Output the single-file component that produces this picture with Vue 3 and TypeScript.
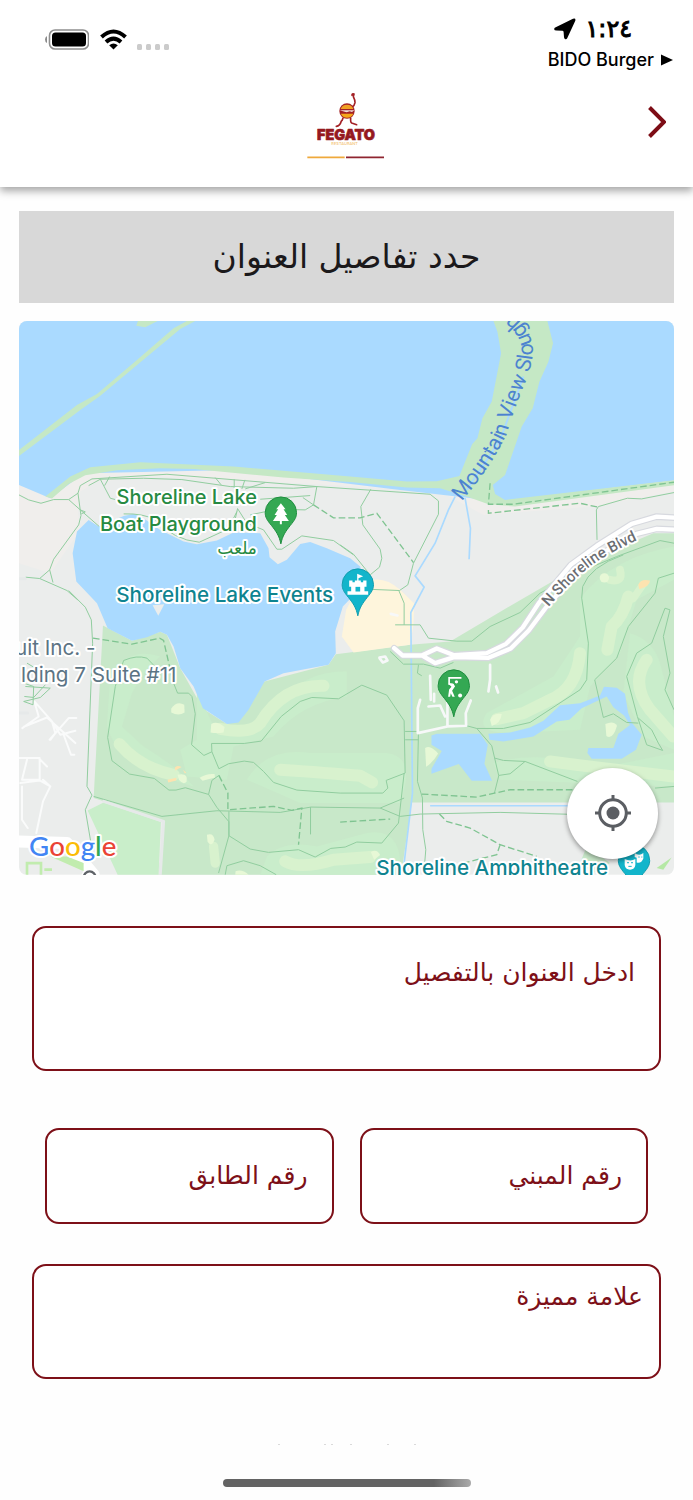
<script setup lang="ts">
import { ref } from 'vue'

const address = ref('')
const building = ref('')
const floor = ref('')
const landmark = ref('')

const googleLetters: { char: string; color: string }[] = [
  { char: 'G', color: '#4285f4' },
  { char: 'o', color: '#ea4335' },
  { char: 'o', color: '#fbbc05' },
  { char: 'g', color: '#4285f4' },
  { char: 'l', color: '#34a853' },
  { char: 'e', color: '#ea4335' },
]
</script>

<template>
  <div class="screen" dir="rtl" lang="ar">
    <header class="header">
      <div class="status" dir="ltr">
        <div class="indicators">
          <svg class="battery" viewBox="0 0 44 21" aria-hidden="true">
            <path d="M2 7Q0 8 0 10.500Q0 13 2 14Z" fill="#8b8b8b" />
            <rect x="4.500" y="1" width="39" height="19" rx="5.500" fill="none" stroke="#8f8f8f" stroke-width="1.600" />
            <rect x="7" y="3.500" width="34" height="14" rx="3.500" fill="#000" />
          </svg>
          <svg class="wifi" viewBox="0 0 27 21" aria-hidden="true">
            <g fill="none" stroke="#000" stroke-width="4">
              <path d="M1.500 8Q13.500 -3 25.500 8" />
              <path d="M6 13Q13.500 6.300 21 13" />
            </g>
            <path d="M9.200 16.300Q13.500 12.800 17.800 16.300L13.500 20.500Z" fill="#000" />
          </svg>
          <svg class="signal" viewBox="0 0 32 6" aria-hidden="true">
            <g fill="#cbcbcb">
              <rect width="5" height="6" rx="1.500" />
              <rect x="9" width="5" height="6" rx="1.500" />
              <rect x="18" width="5" height="6" rx="1.500" />
              <rect x="27" width="5" height="6" rx="1.500" />
            </g>
          </svg>
        </div>
        <div class="clock">
          <div class="time">
            <svg class="arrow" viewBox="0 0 22 22" aria-hidden="true">
              <path d="M1.200 9.600L19 .800Q22 -.200 21.300 2.800L13.200 20.200Q12.400 21.800 11 21Q10 20.500 10 19L9.600 14Q9.500 12.800 8.300 12.700L2.500 12.500Q0 12.500 .2 11Q.3 10 1.200 9.600Z" />
            </svg>
            <span class="digits">١:٢٤</span>
          </div>
          <a class="back-app" href="#">
            BIDO Burger
            <svg class="play" viewBox="0 0 12 12" aria-hidden="true"><path d="M0 .5L12 6L0 11.500Z" /></svg>
          </a>
        </div>
      </div>

      <nav class="nav" dir="ltr">
        <svg class="logo" viewBox="49 36 240 201" role="img" aria-label="Fegato">
          <g fill="none" stroke="#a32025" stroke-width="5" stroke-linecap="round" stroke-linejoin="round">
            <path d="M184 46Q184 40 190 42L188 50Q194 62 193 68Q191 78 185 81" />
            <path d="M157 114Q155 122 152 123Q148 138 137 139" />
            <path d="M180 114Q179 127 183 129L198 134" />
          </g>
          <circle cx="169" cy="93" r="23" fill="#a32025" />
          <path d="M150 87Q154 74 169 74Q184 74 188 87Z" fill="#f0a023" />
          <path d="M147 91H191L184 96L177 94L168 97L157 94Z" fill="#f4dfdc" />
          <path d="M150 101H188Q183 113 169 113Q156 113 150 101Z" fill="#f5a81b" />
          <text x="166" y="179" class="brand">FEGATO</text>
          <text x="162" y="194" class="brand-sub">RESTAURANT</text>
          <path d="M50 232H162" stroke="#efa93c" stroke-width="5" />
          <path d="M166 232H280" stroke="#8f2530" stroke-width="5" />
        </svg>
        <button class="chevron" type="button" aria-label="رجوع">
          <svg viewBox="0 0 18 32" aria-hidden="true"><path d="M1.500 1.500L16 16L1.500 30.500" /></svg>
        </button>
      </nav>
    </header>

    <main class="content">
      <h1 class="title">حدد تفاصيل العنوان</h1>

      <section class="map" aria-label="الخريطة">
        <svg class="map-canvas" viewBox="56 33 1966 1662" direction="ltr">
          <defs>
            <path id="slough-line" d="M1385 575Q1480 460 1520 372Q1535 320 1568 235Q1600 165 1598 115Q1594 60 1535 10" />
            <path id="blvd-line" d="M1645 892Q1730 795 1795 752Q1850 718 1960 668" />
            <path id="pin" d="M0 0C-5-25-14-37-28-55C-42-72-47-80-47-94A47 47 0 0 1 47-94C47-80 42-72 28-55C14-37 5-25 0 0Z" />
            <path id="boulevard" d="M1182 1015L1207 1037H1265L1310 1016L1362 1036L1460 1030L1518 1002L1568 953L1616 880L1712 765L1790 708L1895 642L1970 620L2040 624M1265 1037L1305 1060L1362 1042L1465 1044L1532 1016L1586 962L1640 890L1730 790L1820 722L1910 672L1970 657L2040 660" />
          </defs>

          <rect x="56" y="33" width="1966" height="1662" fill="#ebedec" />
          <path d="M56 520L135 560L250 490L500 470L1050 510L1400 550L2022 505V545L1780 590L1450 615L1320 545L900 520L480 500L290 515L240 545L233 610L240 660L150 790L56 760Z" fill="#f0eeec" />

          <!-- bay -->
          <path d="M56 33H2022V512L1500 575L1200 540L700 480L250 490L150 565L56 525Z" fill="#aadaff" />
          <path d="M56 420L230 285L290 252L410 150L520 55L560 33H585L540 57L440 140L300 257L240 300L56 438ZM413 33H472L435 52L408 47Z" fill="#c5e8c5" />
          <path d="M135 560L210 500L270 472L420 457L700 470L1050 500L1220 515L1310 514L1378 498L1416 403L1432 385L1447 325L1475 275L1503 130L1492 65L1480 33H1642L1659 100L1645 155L1618 215L1598 295L1565 350L1515 495L1478 525L1485 552L1515 570L2022 511V526L1545 590L1465 583L1400 560L1320 535L1220 533L1050 516L850 503L580 477L480 475L350 481L255 496L205 522L155 566Z" fill="#c5e8c5" />
          <path d="M1400 540L1500 390L1570 200" fill="none" stroke="#aadaff" stroke-width="6" />

          <!-- park -->
          <path d="M308 947L395 993L480 966L500 975L540 1075L608 1197L680 1243L793 1115L985 1065L1007 1033L1230 1005L1350 995L1565 868L1640 825L1760 755L1960 670H2022V1478H1235L1203 1695H475L492 1533L280 1465Z" fill="#c8e8c9" />
          <path d="M262 1502L310 1478L482 1537L475 1695H352Z" fill="#c9eeca" />
          <g fill="#c9edcb">
            <path d="M330 1090Q390 1010 480 1040Q430 1080 395 1150L365 1250L430 1310Q530 1370 580 1430L480 1400Q350 1350 320 1250Z" />
            <path d="M590 1140L640 1250Q770 1290 830 1180Q920 1080 1040 1085V1160Q900 1180 820 1280L700 1310L680 1410L560 1400L540 1320L590 1290Z" />
            <path d="M740 1410Q800 1310 930 1330H1160Q1250 1340 1200 1480H900Z" />
            <path d="M800 1640Q850 1590 950 1610L1100 1570Q1210 1550 1200 1695H780Z" />
            <path d="M1740 865Q1840 740 2022 710V810L1910 870L1860 1030L1770 1130L1740 1260L1530 1270Q1420 1270 1460 1210L1660 1100L1740 980Z" />
            <path d="M1480 1360Q1600 1320 1820 1370L2022 1330V1430L1750 1420L1500 1410Z" />
            <path d="M1890 970Q1960 990 1980 1060L2022 1220V1320L1930 1280L1870 1150Z" />
          </g>
          <g fill="none" stroke="#d8f2ce" stroke-width="36" stroke-linecap="round" stroke-linejoin="round">
            <path d="M358 1303Q420 1375 520 1395" />
            <path d="M660 1257Q750 1275 780 1240Q850 1125 970 1128" />
            <path d="M840 1380Q920 1385 1080 1398L1116 1418" />
            <path d="M855 1655Q900 1680 1000 1650L1110 1642" />
            <path d="M1490 1228L1570 1210L1650 1170Q1730 1140 1740 1030" />
            <path d="M1822 1020L1835 950Q1870 920 1885 860" />
            <path d="M1940 1050Q1890 1120 1950 1200L2020 1280" />
            <path d="M1650 1355Q1800 1375 2020 1400" />
            <path d="M640 1610L645 1660" stroke-width="28" />
            <path d="M1830 810Q1870 820 1860 780" stroke-width="24" />
            <path d="M1928 825L1900 866" stroke-width="22" />
          </g>
          <g fill="#e7f8d6">
            <path d="M513 1196Q530 1172 552 1185L553 1208Q535 1220 513 1208Z" />
            <path d="M633 1243Q650 1232 673 1252L670 1268Q648 1272 631 1268Z" />
            <path d="M598 1404Q620 1390 643 1393L644 1403L607 1413Z" />
            <path d="M532 1395Q565 1388 559 1416Q549 1427 536 1410Z" />
            <path d="M620 1575Q640 1568 643 1590Q634 1614 622 1596Z" />
            <path d="M1470 1230Q1480 1207 1505 1213Q1502 1241 1475 1249Z" />
            <path d="M1275 1315Q1290 1303 1314 1331Q1300 1357 1278 1371Z" />
            <path d="M1816 1243Q1840 1231 1851 1248Q1838 1292 1819 1279Z" />
            <circle cx="1813" cy="804" r="14" />
            <path d="M706 1685Q725 1677 745 1695H705Z" />
            <path d="M1112 1627Q1130 1616 1140 1636L1122 1650Z" />
          </g>
          <g fill="#fde3b0">
            <path d="M523 1374Q530 1364 544 1372L525 1382ZM502 1410L528 1404L528 1412L504 1418ZM548 1380L558 1388L554 1391Z" />
            <path d="M1915 825Q1922 805 1950 812Q1950 830 1918 838Z" />
          </g>

          <!-- lakes and streams -->
          <path d="M265 630L230 665L217 730L228 815L290 880L322 955L395 993L440 982L480 966L500 975L520 1010L540 1075L580 1130L608 1195L680 1243L715 1238L745 1200L793 1115L850 1090L985 1065L1007 1030L1005 965L1028 890L1095 820L1080 770L1050 745L980 715L930 696L900 702L860 750L833 763L808 742L805 715L780 670L700 668L650 692L590 703L550 695L480 660L430 625L400 612L370 618L295 650Z" fill="#aadaff" />
          <path d="M457 886L492 883L474 918Z" fill="#ebedec" />
          <path d="M1294 1277L1310 1272H1440L1463 1305L1453 1362L1476 1413H1415L1376 1363L1294 1392V1377L1325 1324L1294 1305Z" fill="#aadaff" />
          <path d="M1465 1272L1530 1268L1590 1253L1630 1233L1680 1186L1740 1180L1800 1157L1812 1131L1850 1134L1875 1152L1884 1208L1896 1240L1925 1275L1908 1320L1865 1347H1775L1762 1330L1765 1315H1840L1855 1272L1890 1246L1872 1217L1840 1192L1820 1160L1745 1195L1708 1230L1670 1235L1600 1280L1510 1295L1468 1290Z" fill="#aadaff" />
          <path d="M1100 815Q1150 795 1200 840L1242 880L1240 945L1230 1005L1060 1028L1025 980L1038 900L1065 850Z" fill="#fef5dc" />
          <g fill="none" stroke="#aadaff" stroke-width="5">
            <path d="M1365 560L1345 600L1305 700L1245 798L1272 832L1232 908L1237 1450L1212 1660" />
            <path d="M1395 565L1411 655L1407 748" />
            <path d="M1290 1488H1760" />
          </g>

          <!-- paths -->
          <g fill="none" stroke="#91cd9f" stroke-width="3" stroke-linejoin="round">
            <path d="M56 555L85 570L122 580L160 569L205 569L233 550L240 527L275 507L500 493L950 530L1290 553L1315 573V613L1240 760L1223 825L1198 842L1100 838" />
            <path d="M265 527L300 508L430 505L545 509L690 530L880 535L950 530L940 585L908 563M300 508L330 565L345 569M328 500L313 527M645 503L663 525M702 508V534M734 510L725 537M780 568L930 557M795 518L735 537" />
            <path d="M205 569L240 600L297 650M233 550L242 617L235 645L160 748L148 780L118 806L76 802M240 600L255 606L243 612M148 780L158 818M118 806L200 842L232 870M205 842L255 892L273 930L277 1000L260 1430L275 1456L255 1500L272 1600" />
            <path d="M370 612Q430 610 465 630Q520 690 597 697L700 650L712 596L740 640L790 660L830 718H845L905 678L1000 692L1060 735M710 605L700 625M750 615L830 598L915 600L940 585" />
            <path d="M1112 538L1082 590L1088 645L1140 718L1145 745L1138 772L1110 795M1020 705L1060 733L1110 795" />
            <path d="M2022 548L1925 567L1882 565L1795 590L1789 600L1791 690" />
            <path d="M345 1130L370 1052Q410 1035 440 1045L462 1068M345 1130L322 1283L335 1353L388 1393L462 1406L506 1441H527L555 1434L625 1454L650 1493L686 1536V1578M520 1120L532 1150H565L575 1160L585 1212L574 1305L611 1337L635 1326L634 1301H732L783 1294L843 1220L900 1175L935 1163L1015 1167L1085 1126L1160 1156L1212 1233L1215 1390L1158 1412L1163 1435L1148 1450H1020L890 1441L820 1418L790 1385L760 1358L732 1354L685 1362L656 1377L635 1326M656 1397L635 1412L625 1454" />
            <path d="M280 1460L485 1520L650 1503L840 1508L932 1492L1140 1495L1212 1465M686 1505V1578L655 1690M686 1578L750 1618L805 1628L895 1620L945 1642L992 1616L1035 1612L1070 1597L1145 1600L1195 1540L1212 1390M675 1695L680 1668L730 1653L780 1668L828 1695M931 1492V1574M1140 1495L1200 1520L1260 1513L1500 1508L1720 1514" />
            <path d="M1185 945H1260L1285 985L1370 994H1415L1470 950L1560 908L1620 850L1730 790L1850 740L1980 692L2022 700M1196 842L1212 880V945M1170 1025L1210 1063H1270L1320 1075L1360 1058M1255 1065L1252 1090L1265 1098" />
            <path d="M1745 865L1748 830Q1770 770 1870 735M1745 865L1765 1000L1760 1110L1740 1140L1590 1238L1510 1256H1430L1400 1248M1430 1256L1475 1308L1496 1398L1483 1450M1484 1345L1510 1352L1575 1355L1732 1415M1496 1397L1530 1392L1575 1355M1784 1110L1850 1045L1885 950L1965 850L1975 805L2022 790M1784 1110L1810 1223L1840 1212L1880 1238L1915 1240M1995 895L2010 900L1990 980L2010 1090L1995 1140L2022 1200M1995 895L1955 1000L1910 1030L1880 1100L1912 1220L1940 1305L1988 1322L1975 1300L1955 1260L1915 1225" />
            <path d="M1215 1265H1255L1252 1415L1267 1465L1268 1560L1277 1620L1272 1680M1215 1290H1255M1965 1435L2022 1430" />
          </g>
          <g fill="none" stroke="#7fc491" stroke-width="4" stroke-dasharray="20 9">
            <path d="M278 985L395 1003L478 985L490 992L518 1115M656 1397L683 1450V1500L820 1490L875 1502L905 1495L895 1605M940 585L1000 624H1080L1130 610L1240 758M1470 520L1465 583L1540 583L2022 517M1465 600V610L1740 580L1795 592M1265 1453L1430 1462L1530 1440H1720M1020 1537L1170 1528M1318 1513L1340 1535L1410 1555L1500 1605L1610 1640M1500 1605L1490 1635L1390 1660" />
          </g>

          <!-- roads -->
          <g fill="none" stroke-linejoin="round" stroke-linecap="round">
            <use href="#boulevard" stroke="#d7d9df" stroke-width="20" />
            <use href="#boulevard" stroke="#fff" stroke-width="13" />
            <path d="M1138 1045L1148 1058L1162 1052L1155 1040L1138 1043M1290 1098L1292 1170M1302 1152V1175M1285 1190L1320 1187L1335 1220M1260 1170L1253 1195V1270L1342 1250L1398 1248L1397 1210L1412 1172M1342 1250V1180M1470 1065V1110L1465 1145M1488 1130L1494 1148M1172 912L1192 917" stroke="#f7f8f9" stroke-width="8" />
            <path d="M50 1595L200 1600L280 1695" stroke="#fff" stroke-width="36" />
            <path d="M310 1475L490 1535L480 1695M56 1210H82M56 807H75" stroke="#e6e9e9" stroke-width="9" />
            <path d="M66 1255L115 1220L102 1175L155 1235L180 1275L225 1263M72 1250L140 1223L225 1300M148 1290L205 1225H228M155 1235L165 1270L150 1290M190 1275L212 1335H222M56 1345H118V1410H65L80 1350M115 1345L140 1370M60 1420L118 1412L150 1430L128 1475L108 1570M65 1430V1530L82 1555M150 1430L128 1410" stroke="#fafbfb" stroke-width="6" />
          </g>
          <path d="M72 1160L100 1163L135 1125M75 1130L150 1135L120 1163L70 1175M70 1120L100 1130L98 1185L70 1175M80 1060L105 1075" fill="none" stroke="#91cd9f" stroke-width="3" />
          <path d="M150 1640L250 1685V1660L200 1640ZM56 1612H100" fill="#c1ecae" />
          <path d="M80 1695V1660H122V1695M132 1680H155" fill="none" stroke="#c1ecae" stroke-width="8" />
          <path d="M1740 1660L1760 1610L1830 1660L1780 1690Z" fill="#c8e8c9" />
          <path d="M1970 1675L2015 1643L1990 1680Z" fill="#b5e8a5" />

          <!-- pins -->
          <g transform="translate(842 702)">
            <use href="#pin" fill="#34a853" stroke="#1e8e3e" stroke-width="3" />
            <path d="M0-122L-14-104H-8L-19-87H-12L-24-69H-3V-59H3V-69H24L12-87H19L8-104H14Z" fill="#fff" />
          </g>
          <g transform="translate(1073 918)">
            <use href="#pin" fill="#12b5cb" stroke="#129eaf" stroke-width="3" />
            <path d="M-2-126L16-119L2-113V-106H9V-101H16V-106H26V-87H20V-74H31V-63H-31V-74H-20V-87H-26V-106H-16V-101H-9V-106H-2Z" fill="#fff" />
            <rect x="-7" y="-87" width="14" height="14" fill="#12b5cb" />
          </g>
          <g transform="translate(1361 1221)">
            <use href="#pin" fill="#34a853" stroke="#1e8e3e" stroke-width="3" />
            <path d="M23-117H-14L-14-98L0-95" fill="none" stroke="#fff" stroke-width="5" />
            <path d="M-16-101L-2-100L4-92L-5-78L3-60H-4L-9-71L-11-60H-17L-14-82L-7-90Z" fill="#fff" />
            <circle cx="8" cy="-105" r="5" fill="#fff" />
            <circle cx="19" cy="-64" r="6" fill="#fff" />
          </g>
          <g transform="translate(1902 1746)">
            <use href="#pin" fill="#12b5cb" stroke="#129eaf" stroke-width="3" />
            <path d="M-28-98Q-10-90 4-98V-80Q2-66-12-66Q-26-66-28-80ZM2-116Q16-106 28-116V-100Q22-84 8-88V-102L2-104Z" fill="#fff" />
            <path d="M-21-87H-15M-9-87H-3M-17-76H-7M13-104H17M22-104H25" stroke="#12b5cb" stroke-width="3" />
          </g>

          <!-- labels -->
          <g class="label green" text-anchor="end">
            <text x="770" y="583">Shoreline Lake</text>
            <text x="770" y="664">Boat Playground</text>
            <text x="770" y="732" class="label-ar">ملعب</text>
          </g>
          <g class="label teal">
            <text x="348" y="875">Shoreline Lake Events</text>
            <text x="1128" y="1696">Shoreline Amphitheatre</text>
          </g>
          <g class="label slate">
            <text x="44" y="1037">uit Inc. -</text>
            <text x="62" y="1118">lding 7 Suite #11</text>
          </g>
          <text class="slough"><textPath href="#slough-line">Mountain View Slough</textPath></text>
          <text class="blvd"><textPath href="#blvd-line">N Shoreline Blvd</textPath></text>
          <path d="M250 1705A18 20 0 0 1 286 1705" fill="none" stroke="#fff" stroke-width="16" />
          <path d="M250 1705A18 20 0 0 1 286 1705" fill="none" stroke="#5f6368" stroke-width="7" />
          <text class="google" x="86" y="1639"><tspan v-for="(letter, i) in googleLetters" :key="i" :fill="letter.color">{{ letter.char }}</tspan></text>
        </svg>
        <button class="locate" type="button" aria-label="موقعي الحالي">
          <svg viewBox="0 0 36 36" aria-hidden="true">
            <circle cx="18" cy="18" r="13.300" fill="none" stroke="#5b5e63" stroke-width="3" />
            <circle cx="18" cy="18" r="6.500" fill="#5b5e63" />
            <path d="M18 0V5M18 31V36M0 18H5M31 18H36" stroke="#5b5e63" stroke-width="3" />
          </svg>
        </button>
      </section>

      <form class="form" @submit.prevent>
        <textarea v-model="address" class="field address" aria-label="ادخل العنوان بالتفصيل" placeholder="ادخل العنوان بالتفصيل"></textarea>
        <div class="pair">
          <input v-model="building" class="field" type="text" aria-label="رقم المبني" placeholder="رقم المبني">
          <input v-model="floor" class="field" type="text" aria-label="رقم الطابق" placeholder="رقم الطابق">
        </div>
        <textarea v-model="landmark" class="field landmark" aria-label="علامة مميزة" placeholder="علامة مميزة"></textarea>
      </form>
    </main>

    <footer class="bottom">
      <svg class="peek" viewBox="0 0 138 1" aria-hidden="true">
        <path d="M0 .5H2M46 .5H48M53 .5H55M72 .5H74M109 .5H111M136 .5H138" stroke="#dadada" />
      </svg>
      <div class="home"></div>
    </footer>
  </div>
</template>

<style>
body {
  margin: 0;
  background: #fefefe;
}
</style>

<style scoped>
.screen {
  display: flex;
  flex-direction: column;
  box-sizing: border-box;
  min-height: 100vh;
  font-family: "DejaVu Sans", sans-serif;
  color: #1b191b;
}
.header {
  background: #fff;
  box-shadow: 0 4px 8px rgba(0, 0, 0, 0.35);
}
.status {
  display: flex;
  justify-content: space-between;
  height: 75px;
  padding: 0 20px 0 45px;
  box-sizing: border-box;
  color: #000;
}
.indicators {
  display: flex;
  align-items: flex-end;
  height: 50px;
}
.battery {
  width: 44px;
  height: 21px;
}
.wifi {
  width: 27px;
  height: 21px;
  margin-left: 11px;
}
.signal {
  width: 32px;
  height: 6px;
  margin-left: 10px;
}
.clock {
  display: flex;
  flex-direction: column;
  align-items: center;
  padding-top: 12px;
}
.time {
  display: flex;
  align-items: center;
  gap: 9px;
  height: 34px;
  padding-right: 34px;
  font-size: 24px;
}
.digits {
  -webkit-text-stroke: 1px #000;
}
.arrow {
  width: 22px;
  height: 22px;
}
.back-app {
  display: flex;
  align-items: center;
  gap: 7px;
  font: 500 18px/30px Inter, sans-serif;
  color: #000;
  text-decoration: none;
}
.play {
  width: 12px;
  height: 12px;
}
.nav {
  display: grid;
  grid-template-columns: 1fr auto 1fr;
  align-items: start;
  padding: 17px 14px 28px;
}
.logo {
  grid-column: 2;
  width: 80px;
  height: 67px;
}
.brand {
  font: 900 43px Inter, sans-serif;
  fill: #95191e;
  stroke: #95191e;
  stroke-width: 2px;
  stroke-linejoin: round;
  text-anchor: middle;
}
.brand-sub {
  font: 500 12px Inter, sans-serif;
  fill: #f3c577;
  text-anchor: middle;
}
.chevron {
  display: flex;
  justify-content: center;
  align-items: center;
  justify-self: end;
  width: 44px;
  height: 60px;
  padding: 0;
  border: 0;
  background: none;
}
.chevron svg {
  width: 18px;
  height: 32px;
  fill: none;
  stroke: #7d0d16;
  stroke-width: 4;
}
.content {
  padding: 24px 19px 0;
}
.title {
  margin: 0 0 18px;
  padding: 18px 0;
  background: #d8d8d8;
  font-size: 33px;
  font-weight: 400;
  line-height: 56px;
  text-align: center;
}
.map {
  position: relative;
  overflow: hidden;
  border-radius: 8px;
}
.map-canvas {
  display: block;
  width: 100%;
  height: auto;
}
.label,
.google,
.blvd {
  paint-order: stroke;
  stroke: #fff;
  stroke-width: 12px;
  stroke-linejoin: round;
}
.label {
  font: 500 62px Inter, sans-serif;
}
.green {
  fill: #268a42;
  font-size: 60px;
}
.label-ar {
  font: 500 51px "DejaVu Sans", sans-serif;
}
.teal {
  fill: #0e8490;
}
.slate {
  fill: #5c7484;
  font-weight: 400;
}
.slough {
  font: 400 64px Roboto, sans-serif;
  fill: #4c83d0;
}
.blvd {
  font: 500 46px Roboto, sans-serif;
  fill: #6b6e73;
}
.google {
  font: 500 83px Lato, sans-serif;
}
.locate {
  position: absolute;
  right: 16px;
  bottom: 16px;
  display: flex;
  align-items: center;
  justify-content: center;
  width: 91px;
  height: 91px;
  padding: 0;
  border: 0;
  border-radius: 50%;
  background: #fff;
  box-shadow: 0 2px 5px rgba(0, 0, 0, 0.4);
}
.locate svg {
  width: 36px;
  height: 36px;
}
.form {
  display: flex;
  flex-direction: column;
  padding: 51px 13px 0;
}
.field {
  display: block;
  box-sizing: border-box;
  width: 100%;
  min-width: 0;
  height: 96px;
  margin: 0;
  padding: 0 24px;
  border: 2px solid #7d1018;
  border-radius: 14px;
  outline: 0;
  background: #fff;
  color: #7d1018;
  font: 400 25px/40px "DejaVu Sans", sans-serif;
  resize: none;
}
.field::placeholder {
  color: #7d1018;
  opacity: 1;
}
.address {
  height: 145px;
  padding-top: 25px;
}
.landmark {
  height: 115px;
  padding: 11px 16px;
}
.pair {
  display: flex;
  gap: 26px;
  padding: 57px 13px 40px;
}
.bottom {
  display: flex;
  flex-direction: column;
  align-items: center;
  margin-top: auto;
  padding-bottom: 13px;
}
.peek {
  width: 138px;
  height: 1px;
  margin-bottom: 34px;
}
.home {
  width: 248px;
  height: 8px;
  border-radius: 4px;
  background: linear-gradient(90deg, #636363 85%, #aaa);
}
</style>
